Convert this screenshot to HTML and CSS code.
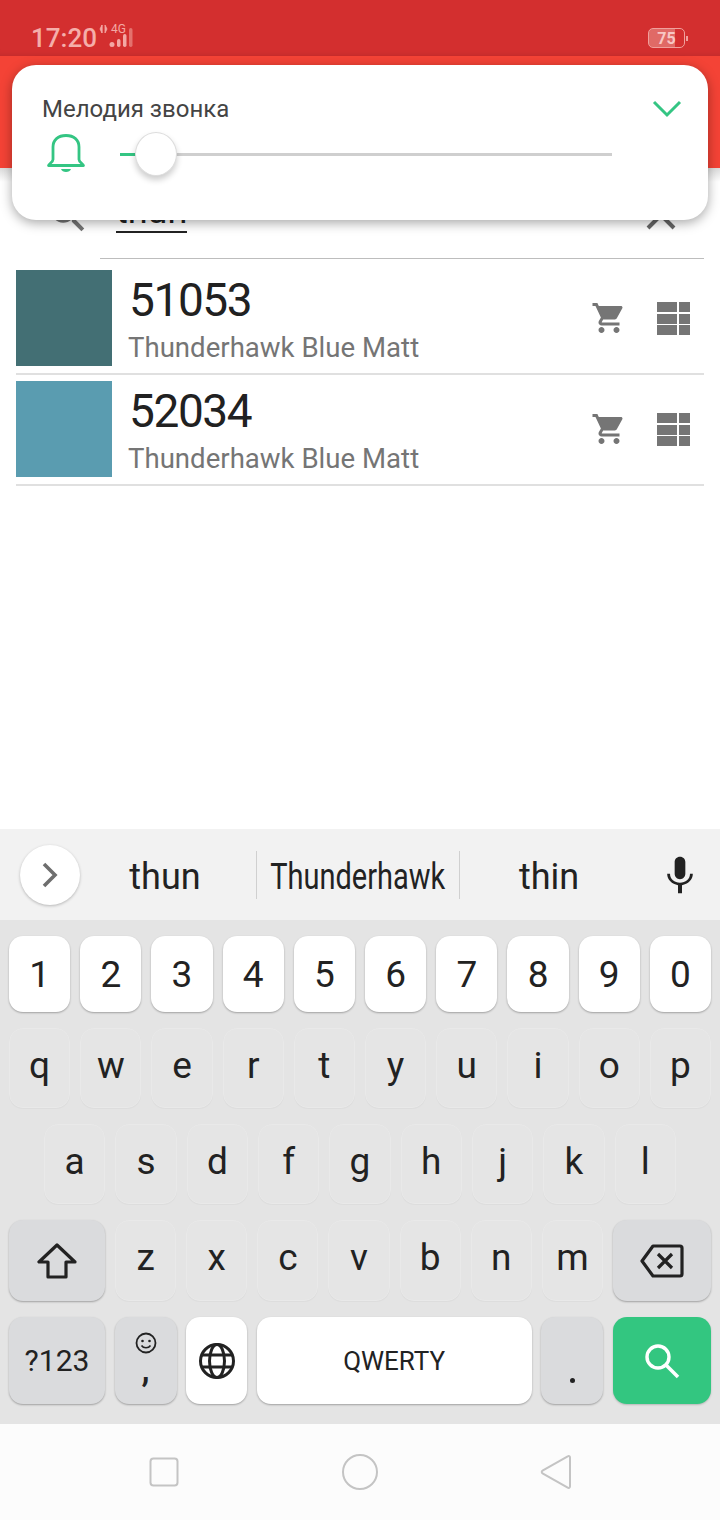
FILE: index.html
```html
<!DOCTYPE html>
<html lang="en">
  <head>
    <meta charset="UTF-8" />
    <meta name="viewport" content="width=device-width, initial-scale=1.0" />
    <title>Thunderhawk</title>
    <link rel="stylesheet" href="styles.css">
  </head>
  <body>
    <div class="screen">
      <div class="status_bar">
        <span class="clock">17:20</span>
        <svg class="net_icon" width="40" height="26" viewBox="0 0 40 26">
          <path d="M3 3v8M1 7l2-4v8zM6 3v8l2-4z" fill="#f3a8a4" stroke="#f3a8a4" stroke-width="0.8"/>
          <text x="12" y="11" class="net_text">4G</text>
          <circle cx="13" cy="22.5" r="2.5" fill="#f3a8a4"/>
          <rect x="18" y="17" width="3.500" height="8" rx="1.700" fill="#f3a8a4"/>
          <rect x="24" y="12" width="3.500" height="13" rx="1.700" fill="#f3a8a4"/>
          <rect x="30" y="6" width="3.500" height="19" rx="1.700" fill="#e4716d"/>
        </svg>
        <span class="spacer"></span>
        <div class="battery"><span class="battery_num">75</span></div>
        <span class="battery_tip"></span>
      </div>
      <div class="toolbar"></div>

      <div class="search_row">
        <svg class="search_icon" width="46" height="46" viewBox="0 0 24 24">
          <path d="M15.5 14h-.79l-.28-.27A6.47 6.47 0 0 0 16 9.5 6.5 6.5 0 1 0 9.5 16c1.61 0 3.09-.59 4.23-1.57l.27.28v.79l5 4.99L20.49 19l-4.99-5zm-6 0C7.01 14 5 11.99 5 9.5S7.01 5 9.5 5 14 7.01 14 9.5 11.99 14 9.5 14z" fill="#757575"/>
        </svg>
        <span class="search_text">thun</span>
        <span class="spacer"></span>
        <svg class="close_icon" width="30" height="30" viewBox="0 0 30 30">
          <path d="M2 2l26 26M28 2L2 28" stroke="#666" stroke-width="4" fill="none"/>
        </svg>
      </div>

      <div class="list">
        <div class="item">
          <div class="swatch swatch_dark"></div>
          <div class="item_text">
            <div class="item_code">51053</div>
            <div class="item_name">Thunderhawk Blue Matt</div>
          </div>
          <svg class="cart_icon" width="36" height="36" viewBox="0 0 24 24">
            <path d="M7 18c-1.1 0-1.99.9-1.99 2S5.9 22 7 22s2-.9 2-2-.9-2-2-2zM1 2v2h2l3.6 7.59-1.35 2.45c-.16.28-.25.61-.25.96 0 1.1.9 2 2 2h12v-2H7.42c-.14 0-.25-.11-.25-.25l.03-.12.9-1.63h7.45c.75 0 1.41-.41 1.75-1.03l3.58-6.47c.08-.14.12-.31.12-.48 0-.55-.45-1-1-1H5.21l-.94-2H1zm16 16c-1.1 0-1.99.9-1.99 2s.89 2 1.99 2 2-.9 2-2-.9-2-2-2z" fill="#757575"/>
          </svg>
          <div class="grid_icon"><i></i><i></i><i></i><i></i><i></i><i></i></div>
        </div>
        <div class="item">
          <div class="swatch swatch_light"></div>
          <div class="item_text">
            <div class="item_code">52034</div>
            <div class="item_name">Thunderhawk Blue Matt</div>
          </div>
          <svg class="cart_icon" width="36" height="36" viewBox="0 0 24 24">
            <path d="M7 18c-1.1 0-1.99.9-1.99 2S5.9 22 7 22s2-.9 2-2-.9-2-2-2zM1 2v2h2l3.6 7.59-1.35 2.45c-.16.28-.25.61-.25.96 0 1.1.9 2 2 2h12v-2H7.42c-.14 0-.25-.11-.25-.25l.03-.12.9-1.63h7.45c.75 0 1.41-.41 1.75-1.03l3.58-6.47c.08-.14.12-.31.12-.48 0-.55-.45-1-1-1H5.21l-.94-2H1zm16 16c-1.1 0-1.99.9-1.99 2s.89 2 1.99 2 2-.9 2-2-.9-2-2-2z" fill="#757575"/>
          </svg>
          <div class="grid_icon"><i></i><i></i><i></i><i></i><i></i><i></i></div>
        </div>
      </div>

      <div class="suggest_bar">
        <div class="more_btn">
          <svg width="18" height="28" viewBox="0 0 18 28"><path d="M3 3l11 11L3 25" stroke="#6e6e6e" stroke-width="3.600" fill="none"/></svg>
        </div>
        <div class="suggest suggest_one"><span>thun</span></div>
        <div class="suggest_sep"></div>
        <div class="suggest suggest_two"><span class="narrow">Thunderhawk</span></div>
        <div class="suggest_sep"></div>
        <div class="suggest suggest_three"><span>thin</span></div>
        <svg class="mic_icon" width="40" height="40" viewBox="0 0 24 24">
          <path d="M12 14.5c1.9 0 3.2-1.4 3.2-3.2V4.2C15.2 2.4 13.9 1 12 1S8.8 2.4 8.8 4.2v7.1c0 1.8 1.3 3.2 3.2 3.2zM18 11.3c0 3.3-2.7 5.3-6 5.3s-6-2-6-5.3H4.300c0 3.600 2.900 6.300 6.500 6.800V23h2.400v-4.900c3.600-.5 6.500-3.200 6.500-6.800H18z" fill="#222"/>
        </svg>
      </div>

      <div class="keyboard">
        <div class="key_row row_num">
          <div class="key key_white">1</div><div class="key key_white">2</div><div class="key key_white">3</div><div class="key key_white">4</div><div class="key key_white">5</div><div class="key key_white">6</div><div class="key key_white">7</div><div class="key key_white">8</div><div class="key key_white">9</div><div class="key key_white">0</div>
        </div>
        <div class="key_row row_top">
          <div class="key key_letter">q</div><div class="key key_letter">w</div><div class="key key_letter">e</div><div class="key key_letter">r</div><div class="key key_letter">t</div><div class="key key_letter">y</div><div class="key key_letter">u</div><div class="key key_letter">i</div><div class="key key_letter">o</div><div class="key key_letter">p</div>
        </div>
        <div class="key_row row_mid">
          <div class="key key_letter">a</div><div class="key key_letter">s</div><div class="key key_letter">d</div><div class="key key_letter">f</div><div class="key key_letter">g</div><div class="key key_letter">h</div><div class="key key_letter">j</div><div class="key key_letter">k</div><div class="key key_letter">l</div>
        </div>
        <div class="key_row row_low">
          <div class="key key_fn key_shift">
            <svg width="40" height="38" viewBox="0 0 40 38"><path d="M20 3L2 20h9v15h18V20h9z" fill="none" stroke="#222" stroke-width="3.200" stroke-linejoin="round"/></svg>
          </div>
          <div class="key key_letter">z</div><div class="key key_letter">x</div><div class="key key_letter">c</div><div class="key key_letter">v</div><div class="key key_letter">b</div><div class="key key_letter">n</div><div class="key key_letter">m</div>
          <div class="key key_fn key_back">
            <svg width="44" height="34" viewBox="0 0 44 34"><path d="M13 2h27a2 2 0 0 1 2 2v26a2 2 0 0 1-2 2H13L2 17z" fill="none" stroke="#222" stroke-width="3.200" stroke-linejoin="round"/><path d="M18 10l14 14M32 10L18 24" stroke="#222" stroke-width="3.200"/></svg>
          </div>
        </div>
        <div class="key_row row_bottom">
          <div class="key key_fn key_sym">?123</div>
          <div class="key key_fn key_comma">
            <svg width="22" height="22" viewBox="0 0 22 22"><circle cx="11" cy="11" r="9.500" fill="none" stroke="#222" stroke-width="1.800"/><circle cx="7.500" cy="9" r="1.300" fill="#222"/><circle cx="14.500" cy="9" r="1.300" fill="#222"/><path d="M6.500 13.500c2 3 7 3 9 0" fill="none" stroke="#222" stroke-width="1.600"/></svg>
            <span class="comma">,</span>
          </div>
          <div class="key key_white key_globe">
            <svg width="38" height="38" viewBox="0 0 38 38"><g fill="none" stroke="#222" stroke-width="3"><circle cx="19" cy="19" r="16.500"/><ellipse cx="19" cy="19" rx="7.500" ry="16.500"/><path d="M4 13h30M4 25h30"/></g></svg>
          </div>
          <div class="key key_white key_space">QWERTY</div>
          <div class="key key_fn key_dot"><span class="dot"></span></div>
          <div class="key key_go">
            <svg width="38" height="38" viewBox="0 0 38 38"><circle cx="15" cy="15" r="11" fill="none" stroke="#fff" stroke-width="3.400"/><path d="M23 23l12 12" stroke="#fff" stroke-width="3.600"/></svg>
          </div>
        </div>
      </div>

      <div class="nav_bar">
        <div class="nav_cell"><svg width="30" height="30" viewBox="0 0 30 30"><rect x="1.500" y="1.500" width="27" height="27" rx="3" fill="none" stroke="#c4c4c4" stroke-width="2"/></svg></div>
        <div class="nav_cell"><svg width="38" height="38" viewBox="0 0 38 38"><circle cx="19" cy="19" r="17" fill="none" stroke="#c4c4c4" stroke-width="2"/></svg></div>
        <div class="nav_cell"><svg width="32" height="36" viewBox="0 0 32 36"><path d="M30 3.500v29a1.500 1.500 0 0 1-2.300 1.200L2.500 19.300a1.500 1.500 0 0 1 0-2.600L27.700 2.300A1.500 1.500 0 0 1 30 3.500z" fill="none" stroke="#c4c4c4" stroke-width="2"/></svg></div>
      </div>

      <!-- volume popup over the toolbar -->
      <div class="volume_card">
        <div class="volume_head">
          <span class="volume_title">Мелодия звонка</span>
          <svg width="30" height="18" viewBox="0 0 30 18"><path d="M2 2l13 13L28 2" fill="none" stroke="#34c583" stroke-width="3"/></svg>
        </div>
        <div class="volume_body">
          <svg class="bell_icon" width="40" height="40" viewBox="0 0 40 40">
            <path d="M2.500 31.500c0-1.500 4.500-3 4.500-6V13C7 6 12 1.500 20 1.500S33 6 33 13v12.500c0 3 4.500 4.500 4.500 6z" fill="none" stroke="#34c583" stroke-width="2.800" stroke-linejoin="round"/>
            <path d="M15 35h10c-1 4-9 4-10 0z" fill="#34c583"/>
          </svg>
          <div class="slider">
            <div class="slider_fill"></div>
            <div class="slider_thumb"></div>
          </div>
        </div>
      </div>
    </div>
  </body>
</html>
```
FILE: styles.css
```css
* {
  box-sizing: border-box;
}
body {
  margin: 0;
  font-family: Roboto, "Liberation Sans", sans-serif;
  color: #222;
  background: #fff;
}
.screen {
  position: relative;
  width: 720px;
  height: 1520px;
  display: flex;
  flex-direction: column;
  overflow: hidden;
}
.spacer {
  flex: 1;
}

/* status bar */
.status_bar {
  height: 56px;
  flex: none;
  background: #d32f2f;
  display: flex;
  align-items: center;
  padding: 20px 32px 0 31px;
  box-shadow: inset 0 -6px 6px -6px rgba(0, 0, 0, 0.12);
}
.clock {
  font-size: 26px;
  font-weight: 500;
  color: #f5aeaa;
}
.net_icon {
  margin: -6px 0 0 2px;
}
.net_text {
  font-family: Roboto, sans-serif;
  font-size: 12px;
  fill: #f3a8a4;
}
.battery {
  width: 37px;
  height: 20px;
  border: 1.5px solid #f0a09c;
  border-radius: 5px;
  background: linear-gradient(to right, #e06a66 75%, transparent 75%);
  display: flex;
  align-items: center;
  justify-content: center;
}
.battery_num {
  font-size: 16px;
  font-weight: 700;
  color: #f8c7c4;
}
.battery_tip {
  width: 2px;
  height: 5px;
  margin-left: 1px;
  background: #f0a09c;
}

.toolbar {
  height: 112px;
  flex: none;
  background: #f44336;
}

/* search */
.search_row {
  height: 92px;
  flex: none;
  display: flex;
  align-items: flex-end;
  padding: 0 16px;
  position: relative;
  background: linear-gradient(to bottom, #dcdcdc, #fff 14px);
}
.search_row::after {
  content: "";
  position: absolute;
  left: 100px;
  right: 16px;
  bottom: 1px;
  height: 1px;
  background: #bdbdbd;
}
.search_icon {
  margin: 0 0 22px 29px;
}
.search_text {
  font-size: 36px;
  line-height: 40px;
  margin: 0 0 27px 25px;
  border-bottom: 2px solid #222;
}
.close_icon {
  margin: 0 28px 30px 0;
}

/* list */
.list {
  flex: 1;
  padding: 10px 16px 0;
}
.item {
  height: 105px;
  margin-bottom: 6px;
  display: flex;
  align-items: flex-start;
  border-bottom: 2px solid #e0e0e0;
}
.swatch {
  width: 96px;
  height: 96px;
  flex: none;
}
.swatch_dark {
  background: #436f74;
}
.swatch_light {
  background: #5a9cb0;
}
.item_text {
  flex: 1;
  margin-left: 16px;
}
.item_code {
  font-size: 46px;
  line-height: 52px;
  letter-spacing: -1.4px;
  margin: 4px 0 0 1px;
  color: #212121;
}
.item_name {
  font-size: 27.6px;
  line-height: 32px;
  margin-top: 6px;
  color: #757575;
}
.cart_icon {
  margin: 30px 30px 0 0;
}
.grid_icon {
  width: 33px;
  height: 33px;
  margin: 32px 14px 0 0;
  display: grid;
  grid-template-columns: 20px 11px;
  grid-template-rows: 10px 10px 10px;
  gap: 1.5px 2px;
}
.grid_icon i {
  background: #757575;
}

/* keyboard */
.suggest_bar {
  height: 91px;
  flex: none;
  background: #f2f2f2;
  display: flex;
  align-items: center;
  padding: 0 20px;
}
.more_btn {
  width: 60px;
  height: 60px;
  flex: none;
  border-radius: 50%;
  background: #fff;
  box-shadow: 0 1px 3px rgba(0, 0, 0, 0.25);
  display: flex;
  align-items: center;
  justify-content: center;
}
.suggest {
  flex: none;
  display: flex;
  justify-content: center;
  font-size: 36px;
  padding-top: 5px;
}
.suggest_one {
  width: 176px;
  padding-right: 6px;
}
.suggest_two {
  width: 202px;
}
.suggest_three {
  width: 178px;
}
.narrow {
  display: inline-block;
  transform: scaleX(0.805);
  white-space: nowrap;
}
.suggest_sep {
  width: 1px;
  height: 48px;
  flex: none;
  background: #d0d0d0;
}
.mic_icon {
  flex: none;
  margin-left: 22px;
}
.keyboard {
  flex: none;
  height: 504px;
  background: #e4e4e4;
  padding: 16px 9px 20px;
  display: flex;
  flex-direction: column;
  gap: 16px;
}
.key_row {
  display: flex;
  gap: 10px;
}
.row_num {
  height: 76px;
}
.row_top,
.row_mid {
  height: 80px;
}
.row_mid {
  padding: 0 35px;
}
.row_low {
  height: 81px;
}
.row_bottom {
  height: 87px;
  gap: 9.6px;
}
.key {
  flex: 1;
  display: flex;
  align-items: center;
  justify-content: center;
  border-radius: 14px;
  font-size: 37px;
  background: #e5e5e5;
  border: 1px solid #e9e9e9;
  box-shadow: 0 1px 1px rgba(0, 0, 0, 0.03);
}
.key_letter {
  padding-bottom: 6px;
}
.key_white {
  background: #fff;
  border: none;
  box-shadow: 0 1px 2px rgba(0, 0, 0, 0.3);
}
.key_fn {
  background: #dadbdd;
  border: none;
  box-shadow: 0 1px 2px rgba(0, 0, 0, 0.3);
}
.key_shift {
  flex: none;
  width: 96px;
}
.key_back {
  flex: none;
  width: 98px;
}
.key_sym {
  flex: none;
  width: 96px;
  font-size: 30px;
}
.key_comma {
  flex: none;
  width: 62px;
  flex-direction: column;
  justify-content: flex-start;
  padding-top: 15px;
  font-size: 36px;
  font-weight: 500;
}
.comma {
  line-height: 30px;
}
.key_globe {
  flex: none;
  width: 61px;
}
.key_space {
  flex: none;
  width: 275px;
  font-size: 26px;
}
.key_dot {
  flex: none;
  width: 62px;
  align-items: flex-end;
  padding-bottom: 21px;
}
.dot {
  width: 5px;
  height: 5px;
  border-radius: 50%;
  background: #222;
}
.key_go {
  flex: none;
  width: 98px;
  border: none;
  background: #33c680;
  box-shadow: 0 1px 2px rgba(0, 0, 0, 0.2);
}

.nav_bar {
  height: 96px;
  flex: none;
  background: #fcfcfc;
  display: flex;
  justify-content: center;
  align-items: center;
}
.nav_cell {
  width: 196px;
  display: flex;
  justify-content: center;
}

/* volume popup */
.volume_card {
  position: absolute;
  left: 12px;
  top: 65px;
  width: 696px;
  height: 155px;
  background: #fff;
  border-radius: 24px;
  box-shadow: 0 3px 12px rgba(0, 0, 0, 0.35);
}
.volume_head {
  display: flex;
  justify-content: space-between;
  align-items: center;
  padding: 27px 26px 0 30px;
}
.volume_title {
  font-size: 24px;
  line-height: 34px;
  color: #444;
}
.volume_body {
  display: flex;
  align-items: center;
  padding: 0 0 0 34px;
  margin-top: 8px;
}
.slider {
  position: relative;
  width: 492px;
  height: 3px;
  margin-left: 34px;
  background: #cfcfcf;
}
.slider_fill {
  width: 16px;
  height: 3px;
  background: #34c583;
}
.slider_thumb {
  position: absolute;
  left: 15px;
  top: -21px;
  width: 42px;
  height: 44px;
  border-radius: 50%;
  background: #fff;
  border: 1px solid #ddd;
  box-shadow: 0 4px 6px rgba(0, 0, 0, 0.2);
}
```
